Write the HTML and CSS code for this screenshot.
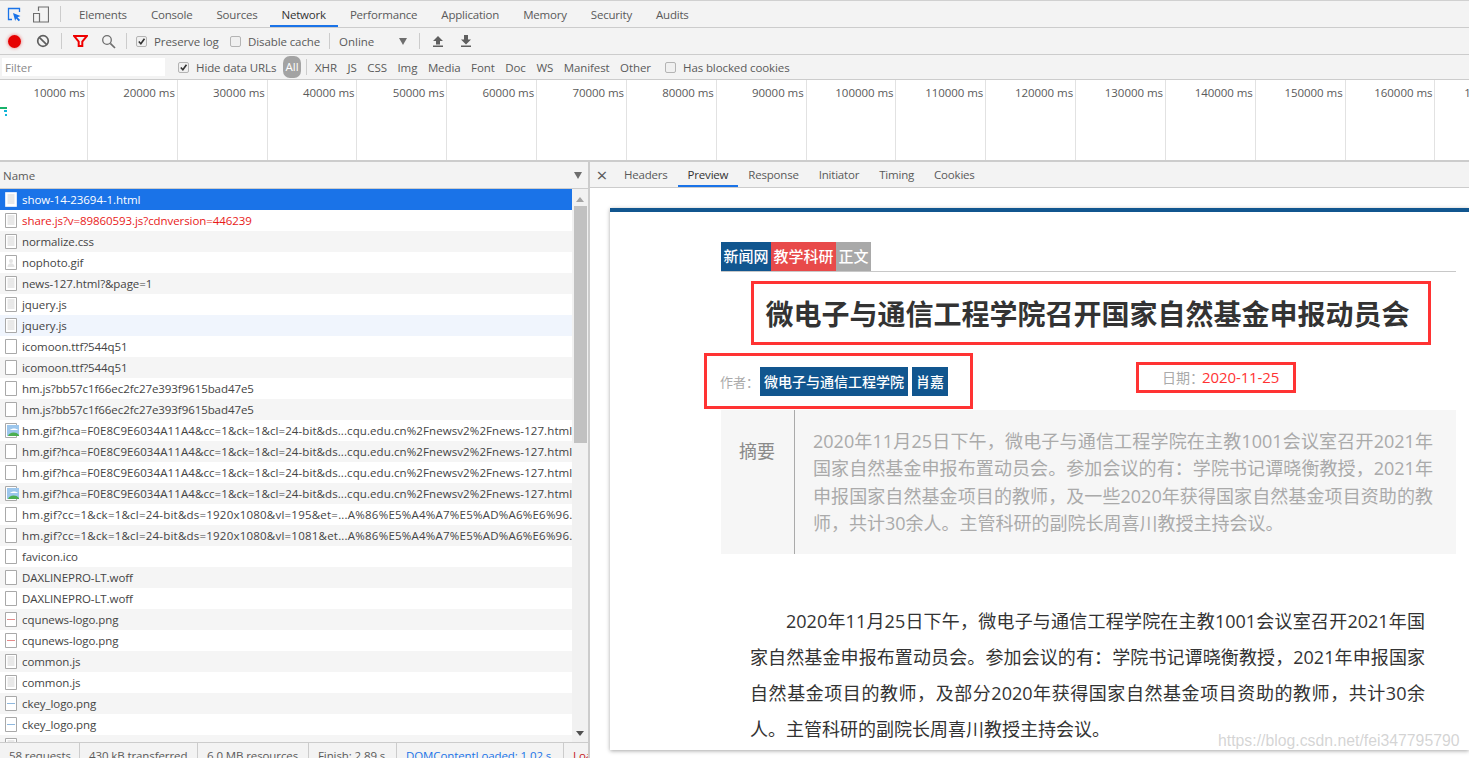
FILE: index.html
```html
<!DOCTYPE html>
<html lang="zh-CN">
<head>
<meta charset="utf-8">
<title>DevTools Network</title>
<link rel="stylesheet" href="styles.css">
</head>
<body>
<svg class="defs" width="0" height="0" aria-hidden="true">
  <symbol id="f-blank" viewBox="0 0 14 15"><path d="M.5.5h11v14H.5z" fill="#fff" stroke="#a9a9a9"/></symbol>
  <symbol id="f-doc" viewBox="0 0 14 15"><path d="M.5.5h11v14H.5z" fill="#fff" stroke="#a9a9a9"/><path d="M2.500 3h7M2.500 5h7M2.500 7h7M2.500 9h7M2.500 11h7" stroke="#d2d2d2"/></symbol>
  <symbol id="f-sel" viewBox="0 0 14 15"><path d="M.5.5h11v14H.5z" fill="#fff" stroke="#d8e6fb"/><path d="M2.500 3h7M2.500 5h7M2.500 7h7M2.500 9h7M2.500 11h7" stroke="#d2d2d2"/></symbol>
  <symbol id="f-img" viewBox="0 0 14 15"><path d="M.5.5h11v14H.5z" fill="#fff" stroke="#a9a9a9"/><path d="M2 2h12v11H2z" fill="#9cc6ec"/><path d="M3 13c1-4 8-5 11-1v1z" fill="#4caf50"/><path d="M5 7c2-2 6-2 8 0z" fill="#fff"/></symbol>
  <symbol id="f-photo" viewBox="0 0 14 15"><path d="M.5.5h11v14H.5z" fill="#fff" stroke="#a9a9a9"/><circle cx="6" cy="6" r="2" fill="#e4e4e4"/><path d="M2.500 12c0-5 7-5 7 0z" fill="#e4e4e4"/></symbol>
  <symbol id="f-red" viewBox="0 0 14 15"><path d="M.5.5h11v14H.5z" fill="#fff" stroke="#a9a9a9"/><path d="M2 7.500h8" stroke="#e58a8a"/></symbol>
  <symbol id="f-blue" viewBox="0 0 14 15"><path d="M.5.5h11v14H.5z" fill="#fff" stroke="#a9a9a9"/><path d="M2 7.500h8" stroke="#8fb8de"/></symbol>
  <symbol id="check" viewBox="0 0 10 10"><path d="M2 5l2.300 2.500L8.300 2" fill="none" stroke="#333" stroke-width="1.800"/></symbol>
</svg>

<div class="devtools">
  <nav class="main-tabs">
    <svg class="ic-inspect" width="15" height="15" viewBox="0 0 15 15"><path d="M5 12.500H1.500v-11h11V5" fill="none" stroke="#1a73e8" stroke-width="1.300"/><path d="M6 6l7.500 3-3 1.200 2.600 2.700-1.400 1.300-2.600-2.700L8.200 14z" fill="#1a73e8"/></svg>
    <svg class="ic-device" width="16" height="17" viewBox="0 0 16 17"><path d="M5.500 5V1h10v15h-10M.5 7.500h6v8.500h-6z" fill="none" stroke="#6e6e6e" stroke-width="1.200"/></svg>
    <span class="vsep vsep-tabs"></span>
    <a class="tab">Elements</a><a class="tab">Console</a><a class="tab">Sources</a><a class="tab active">Network</a><a class="tab">Performance</a><a class="tab">Application</a><a class="tab">Memory</a><a class="tab">Security</a><a class="tab">Audits</a>
  </nav>

  <div class="toolbar">
    <span class="rec"></span>
    <svg class="ic-block" width="14" height="14" viewBox="0 0 14 14"><circle cx="7" cy="7" r="5.300" fill="none" stroke="#5f5f5f" stroke-width="1.700"/><path d="M3.300 3.300l7.400 7.400" stroke="#5f5f5f" stroke-width="1.700"/></svg>
    <span class="vsep vsep-a"></span>
    <svg class="ic-funnel" width="15" height="12" viewBox="0 0 15 12"><path d="M1 1h13L9.300 6.500V11H5.700V6.500z" fill="none" stroke="#e00" stroke-width="2"/></svg>
    <svg class="ic-search" width="15" height="15" viewBox="0 0 15 15"><circle cx="6" cy="6" r="4.300" fill="none" stroke="#6e6e6e" stroke-width="1.300"/><path d="M9.300 9.300l4.700 4.700" stroke="#6e6e6e" stroke-width="1.700"/></svg>
    <span class="vsep vsep-b"></span>
    <label class="opt opt-preserve"><span class="cb"><svg width="10" height="10"><use href="#check"/></svg></span>Preserve log</label>
    <label class="opt opt-disable"><span class="cb"></span>Disable cache</label>
    <span class="vsep vsep-c"></span>
    <span class="online">Online</span>
    <span class="tri"></span>
    <span class="vsep vsep-d"></span>
    <svg class="ic-up" width="12" height="12" viewBox="0 0 12 12"><path d="M6 1l5 5H8v3.500H4V6H1zM1 10.500h10V12H1z" fill="#5f5f5f"/></svg>
    <svg class="ic-down" width="12" height="12" viewBox="0 0 12 12"><path d="M4 0h4v4.500h3l-5 5-5-5h3zM1 10.500h10V12H1z" fill="#5f5f5f"/></svg>
  </div>

  <div class="filterbar">
    <div class="filter-input">Filter</div>
    <label class="opt opt-hide"><span class="cb"><svg width="10" height="10"><use href="#check"/></svg></span>Hide data URLs</label>
    <span class="pill">All</span>
    <span class="vsep vsep-e"></span>
    <div class="types"><span>XHR</span><span>JS</span><span>CSS</span><span>Img</span><span>Media</span><span>Font</span><span>Doc</span><span>WS</span><span>Manifest</span><span>Other</span></div>
    <label class="opt opt-blocked"><span class="cb"></span>Has blocked cookies</label>
  </div>

  <div class="timeline">
    <div class="tick">10000 ms</div><div class="tick">20000 ms</div><div class="tick">30000 ms</div><div class="tick">40000 ms</div><div class="tick">50000 ms</div><div class="tick">60000 ms</div><div class="tick">70000 ms</div><div class="tick">80000 ms</div><div class="tick">90000 ms</div><div class="tick">100000 ms</div><div class="tick">110000 ms</div><div class="tick">120000 ms</div><div class="tick">130000 ms</div><div class="tick">140000 ms</div><div class="tick">150000 ms</div><div class="tick">160000 ms</div><div class="tick">170000 ms</div>
    <span class="mark mark-g"></span><span class="mark mark-c"></span><span class="mark mark-c2"></span>
  </div>

  <div class="split">
    <section class="left">
      <header class="name-head"><span>Name</span><span class="tri tri-name"></span></header>
      <div class="list-wrap">
        <div class="rows">
          <div class="row sel"><svg class="fi"><use href="#f-sel"/></svg><span class="nm">show-14-23694-1.html</span></div>
          <div class="row err"><svg class="fi"><use href="#f-doc"/></svg><span class="nm">share.js?v=89860593.js?cdnversion=446239</span></div>
          <div class="row"><svg class="fi"><use href="#f-doc"/></svg><span class="nm">normalize.css</span></div>
          <div class="row"><svg class="fi"><use href="#f-photo"/></svg><span class="nm">nophoto.gif</span></div>
          <div class="row"><svg class="fi"><use href="#f-doc"/></svg><span class="nm">news-127.html?&amp;page=1</span></div>
          <div class="row"><svg class="fi"><use href="#f-doc"/></svg><span class="nm">jquery.js</span></div>
          <div class="row hov"><svg class="fi"><use href="#f-doc"/></svg><span class="nm">jquery.js</span></div>
          <div class="row"><svg class="fi"><use href="#f-blank"/></svg><span class="nm">icomoon.ttf?544q51</span></div>
          <div class="row"><svg class="fi"><use href="#f-blank"/></svg><span class="nm">icomoon.ttf?544q51</span></div>
          <div class="row"><svg class="fi"><use href="#f-blank"/></svg><span class="nm">hm.js?bb57c1f66ec2fc27e393f9615bad47e5</span></div>
          <div class="row"><svg class="fi"><use href="#f-blank"/></svg><span class="nm">hm.js?bb57c1f66ec2fc27e393f9615bad47e5</span></div>
          <div class="row"><svg class="fi"><use href="#f-img"/></svg><span class="nm wide">hm.gif?hca=F0E8C9E6034A11A4&amp;cc=1&amp;ck=1&amp;cl=24-bit&amp;ds...cqu.edu.cn%2Fnewsv2%2Fnews-127.html</span></div>
          <div class="row"><svg class="fi"><use href="#f-blank"/></svg><span class="nm wide">hm.gif?hca=F0E8C9E6034A11A4&amp;cc=1&amp;ck=1&amp;cl=24-bit&amp;ds...cqu.edu.cn%2Fnewsv2%2Fnews-127.html</span></div>
          <div class="row"><svg class="fi"><use href="#f-blank"/></svg><span class="nm wide">hm.gif?hca=F0E8C9E6034A11A4&amp;cc=1&amp;ck=1&amp;cl=24-bit&amp;ds...cqu.edu.cn%2Fnewsv2%2Fnews-127.html</span></div>
          <div class="row"><svg class="fi"><use href="#f-img"/></svg><span class="nm wide">hm.gif?hca=F0E8C9E6034A11A4&amp;cc=1&amp;ck=1&amp;cl=24-bit&amp;ds...cqu.edu.cn%2Fnewsv2%2Fnews-127.html</span></div>
          <div class="row"><svg class="fi"><use href="#f-blank"/></svg><span class="nm wider">hm.gif?cc=1&amp;ck=1&amp;cl=24-bit&amp;ds=1920x1080&amp;vl=195&amp;et=...A%86%E5%A4%A7%E5%AD%A6%E6%96.</span></div>
          <div class="row"><svg class="fi"><use href="#f-blank"/></svg><span class="nm wider">hm.gif?cc=1&amp;ck=1&amp;cl=24-bit&amp;ds=1920x1080&amp;vl=1081&amp;et...A%86%E5%A4%A7%E5%AD%A6%E6%96.</span></div>
          <div class="row"><svg class="fi"><use href="#f-blank"/></svg><span class="nm">favicon.ico</span></div>
          <div class="row"><svg class="fi"><use href="#f-blank"/></svg><span class="nm">DAXLINEPRO-LT.woff</span></div>
          <div class="row"><svg class="fi"><use href="#f-blank"/></svg><span class="nm">DAXLINEPRO-LT.woff</span></div>
          <div class="row"><svg class="fi"><use href="#f-red"/></svg><span class="nm">cqunews-logo.png</span></div>
          <div class="row"><svg class="fi"><use href="#f-red"/></svg><span class="nm">cqunews-logo.png</span></div>
          <div class="row"><svg class="fi"><use href="#f-doc"/></svg><span class="nm">common.js</span></div>
          <div class="row"><svg class="fi"><use href="#f-doc"/></svg><span class="nm">common.js</span></div>
          <div class="row"><svg class="fi"><use href="#f-blue"/></svg><span class="nm">ckey_logo.png</span></div>
          <div class="row"><svg class="fi"><use href="#f-blue"/></svg><span class="nm">ckey_logo.png</span></div>
          <div class="row"><svg class="fi"><use href="#f-doc"/></svg><span class="nm">base.js</span></div>
        </div>
        <div class="scrollbar">
          <span class="sb-up"></span>
          <span class="sb-thumb"></span>
          <span class="sb-down"></span>
        </div>
      </div>
      <footer class="status">
        <span class="st st1">58 requests</span><span class="st st2">430 kB transferred</span><span class="st st3">6.0 MB resources</span><span class="st st4">Finish: 2.89 s</span><span class="st st5 dcl">DOMContentLoaded: 1.02 s</span><span class="st st6 load">Load: 1.95 s</span>
      </footer>
    </section>

    <section class="right">
      <nav class="detail-tabs">
        <span class="close">×</span>
        <a class="dtab">Headers</a><a class="dtab active">Preview</a><a class="dtab">Response</a><a class="dtab">Initiator</a><a class="dtab">Timing</a><a class="dtab">Cookies</a>
      </nav>
      <div class="preview">
        <article class="card">
          <div class="crumbs">
            <a class="crumb c-blue">新闻网</a><a class="crumb c-red">教学科研</a><a class="crumb c-gray">正文</a>
          </div>
          <h1 class="title">微电子与通信工程学院召开国家自然基金申报动员会</h1>
          <div class="meta">
            <div class="authors"><span class="lbl">作者：</span><a class="tag">微电子与通信工程学院</a><a class="tag">肖嘉</a></div>
            <div class="date"><span class="lbl-date">日期：</span><span class="date-val">2020-11-25</span></div>
          </div>
          <div class="summary">
            <div class="sum-label">摘要</div>
            <p class="sum-text">2020年11月25日下午，微电子与通信工程学院在主教1001会议室召开2021年国家自然基金申报布置动员会。参加会议的有：学院书记谭晓衡教授，2021年申报国家自然基金项目的教师，及一些2020年获得国家自然基金项目资助的教师，共计30余人。主管科研的副院长周喜川教授主持会议。</p>
          </div>
          <p class="body-text">2020年11月25日下午，微电子与通信工程学院在主教1001会议室召开2021年国家自然基金申报布置动员会。参加会议的有：学院书记谭晓衡教授，2021年申报国家自然基金项目的教师，及部分2020年获得国家自然基金项目资助的教师，共计30余人。主管科研的副院长周喜川教授主持会议。</p>
        </article>
      </div>
    </section>
  </div>
</div>
<div class="watermark">https://blog.csdn.net/fei347795790</div>
</body>
</html>
```
FILE: styles.css
```css
* { box-sizing: border-box; }
html, body { margin: 0; height: 100%; overflow: hidden; }
body { background: #fff; font-family: "Open Sans", "Noto Sans CJK SC", sans-serif; font-size: 11.5px; color: #5a5a5a; }
.defs { position: absolute; }
.devtools { width: 1469px; height: 758px; display: flex; flex-direction: column; overflow: hidden; }

/* shared */
.vsep { width: 1px; height: 16px; background: #ccc; flex: none; }
.opt { display: flex; align-items: center; flex: none; letter-spacing: -.1px; }
.cb { width: 11px; height: 11px; margin-right: 7px; border: 1px solid #b4b4b4; border-radius: 2px; background: #f0f0f0; display: flex; flex: none; }
.cb svg { display: block; margin: 0; width: 9px; height: 9px; }
.tri { width: 0; height: 0; border-left: 4px solid transparent; border-right: 4px solid transparent; border-top: 7px solid #6e6e6e; flex: none; }

/* main tabs */
.main-tabs { height: 28px; flex: none; display: flex; align-items: center; background: #f3f3f3; border-top: 1px solid #d0d0d0; border-bottom: 1px solid #ccc; }
.ic-inspect { margin-left: 7px; flex: none; }
.ic-device { margin-left: 11px; flex: none; }
.vsep-tabs { margin: 0 6px 0 11px; }
.tab { height: 26px; line-height: 28px; padding: 0 12px; border-bottom: 2px solid transparent; flex: none; letter-spacing: -.2px; }
.tab.active { color: #333; border-bottom-color: #1a73e8; }

/* toolbar */
.toolbar { height: 27px; flex: none; display: flex; align-items: center; background: #f3f3f3; border-bottom: 1px solid #ccc; }
.rec { width: 13px; height: 13px; margin-left: 8px; border-radius: 50%; background: #e60000; box-shadow: 0 0 3px 1px rgba(230,0,0,.3); flex: none; }
.ic-block { margin-left: 15px; flex: none; }
.vsep-a { margin-left: 11px; }
.ic-funnel { margin-left: 11px; flex: none; }
.ic-search { margin-left: 13px; flex: none; }
.vsep-b { margin-left: 10px; }
.opt-preserve { margin-left: 9px; width: 94px; }
.opt-disable { width: 99px; }
.vsep-c { margin-left: 0; }
.online { margin-left: 9px; width: 60px; }
.vsep-d { margin-left: 12px; }
.ic-up { margin-left: 12px; flex: none; }
.ic-down { margin-left: 16px; flex: none; }

/* filter bar */
.filterbar { height: 25px; flex: none; display: flex; align-items: center; background: #f3f3f3; border-bottom: 1px solid #ccc; }
.filter-input { width: 163px; height: 18px; line-height: 19px; margin-left: 2px; padding-left: 3px; background: #fff; color: #8a8a8a; flex: none; }
.opt-hide { margin-left: 13px; width: 105px; }
.pill { width: 18px; height: 22px; line-height: 22px; text-align: center; border-radius: 7px; background: #a3a3a3; color: #fff; flex: none; }
.vsep-e { margin-left: 5px; }
.types { display: flex; margin-left: 8px; width: 336px; justify-content: space-between; flex: none; letter-spacing: -.1px; }
.opt-blocked { margin-left: 14px; }

/* timeline */
.timeline { position: relative; height: 82px; flex: none; display: flex; background: #fff; border-bottom: 2px solid #ccc; }
.tick { flex: 0 0 89.840px; border-right: 1px solid #e2e2e2; text-align: right; padding: 4px 2px 0 0; white-space: nowrap; line-height: 18px; letter-spacing: -.05px; }
.tick:first-child { flex-basis: 88px; }
.mark { position: absolute; display: block; }
.mark-g { left: 0; top: 27px; width: 7px; height: 2px; background: #17b26a; }
.mark-c { left: 4px; top: 30px; width: 3px; height: 2px; background: #12b5d8; }
.mark-c2 { left: 5px; top: 34px; width: 2px; height: 2px; background: #12b5d8; }

/* split */
.split { flex: 1; min-height: 0; display: flex; }
.left { width: 590px; flex: none; display: flex; flex-direction: column; border-right: 2px solid #ccc; background: #fff; }
.name-head { height: 27px; flex: none; display: flex; align-items: center; justify-content: space-between; padding: 0 6px 0 3px; background: #f3f3f3; border-bottom: 1px solid #ccc; }
.tri-name { border-left-width: 4px; border-right-width: 4px; }
.list-wrap { flex: 1; min-height: 0; display: flex; overflow: hidden; }
.rows { width: 572px; flex: none; overflow: hidden; }
.row { height: 21px; display: flex; align-items: center; padding-left: 5px; white-space: nowrap; overflow: hidden; color: #444; letter-spacing: -.07px; }
.row:nth-child(even) { background: #fff; }
.row:nth-child(odd) { background: #f5f5f5; }
.row.sel { background: #1a73e8; color: #fff; }
.row.err { color: #e81a1a; }
.row.hov { background: #f0f5fd; }
.fi { width: 14px; height: 15px; flex: none; margin-right: 3px; }
.nm { display: block; }
.wide { letter-spacing: .09px; }
.wider { letter-spacing: .22px; }
.scrollbar { width: 16px; flex: none; background: #f1f1f1; display: flex; flex-direction: column; align-items: center; padding-top: 8px; }
.sb-up { width: 0; height: 0; border-left: 4px solid transparent; border-right: 4px solid transparent; border-bottom: 5px solid #a3a3a3; flex: none; }
.sb-thumb { width: 13px; height: 237px; margin-top: 4px; background: #c1c1c1; flex: none; }
.sb-down { width: 0; height: 0; margin-top: auto; margin-bottom: 6px; border-left: 4px solid transparent; border-right: 4px solid transparent; border-top: 5px solid #505050; flex: none; }
.status { height: 16px; flex: none; display: flex; background: #f3f3f3; border-top: 1px solid #ccc; overflow: hidden; }
.st { height: 20px; padding-top: 5px; flex: none; white-space: nowrap; border-right: 1px solid #ccc; padding-left: 9px; letter-spacing: -.1px; }
.st1 { width: 80px; }
.st2 { width: 118px; }
.st3 { width: 111px; }
.st4 { width: 88px; }
.st5 { width: 167px; }
.st6 { border-right: 0; }
.dcl { color: #1a73e8; }
.load { color: #c5221f; }

/* detail */
.right { flex: 1; min-width: 0; display: flex; flex-direction: column; background: #fff; }
.detail-tabs { height: 26px; flex: none; display: flex; align-items: center; background: #f3f3f3; border-bottom: 1px solid #ccc; }
.close { width: 24px; text-align: center; font-size: 19px; line-height: 20px; color: #5a5a5a; flex: none; }
.dtab { height: 25px; line-height: 25px; padding: 0 10px; border-bottom: 2px solid transparent; flex: none; letter-spacing: -.2px; }
.dtab.active { color: #333; border-bottom-color: #1a73e8; }
.preview { flex: 1; min-height: 0; padding: 20px 0 0 20px; overflow: hidden; }

/* article */
.card { height: 542px; border-top: 4px solid #11568f; box-shadow: 0 1px 4px rgba(0,0,0,.35); background: #fff; padding: 30px 13px 0 111px; overflow: hidden; font-family: "Noto Sans CJK SC", sans-serif; }
.crumbs { display: flex; height: 30px; border-bottom: 1px solid #c8c8c8; }
.crumb { height: 29px; padding: 0 2.500px; font-size: 15px; font-weight: 500; line-height: 28px; color: #fff; flex: none; }
.c-blue { background: #11568f; }
.c-red { background: #e84a4a; }
.c-gray { background: #a9a9a9; }
.title { width: 680px; height: 64px; margin: 9px 0 0 30px; padding-right: 7px; border: 3px solid #f33; font-size: 28px; font-weight: 700; line-height: 58px; text-align: center; color: #333; white-space: nowrap; }
.meta { display: flex; align-items: flex-start; height: 56px; margin: 8px 0 0 -17px; }
.authors { width: 269px; height: 56px; display: flex; align-items: center; padding-left: 13px; border: 3px solid #f33; flex: none; }
.lbl { width: 40px; font-size: 13px; color: #aaa; flex: none; }
.tag { height: 29px; line-height: 29px; padding: 0 4px; margin-right: 4px; font-size: 14px; font-weight: 500; color: #fff; background: #11568f; flex: none; white-space: nowrap; }
.date { width: 160px; height: 31px; margin: 9px 0 0 163px; padding-left: 23px; line-height: 25px; font-size: 14px; border: 3px solid #f33; flex: none; white-space: nowrap; }
.lbl-date { display: inline-block; width: 40px; color: #aaa; }
.date-val { font-family: "Open Sans", sans-serif; font-size: 15px; letter-spacing: -.1px; color: #f33; }
.summary { display: flex; height: 144px; margin-top: 1px; background: #f6f6f6; }
.sum-label { width: 74px; padding: 25px 0 0 18px; font-size: 18px; line-height: 30px; color: #8a8a8a; border-right: 1px solid #aaa; flex: none; }
.sum-text { width: 620px; margin: 18px 0 0 18px; font-family: "Open Sans", "Noto Sans CJK SC", sans-serif; font-size: 18px; line-height: 27.33px; text-align: justify; color: #aaa; }
.body-text { width: 675px; margin: 49px 0 0 29px; font-family: "Open Sans", "Noto Sans CJK SC", sans-serif; font-size: 18px; line-height: 36px; text-align: justify; text-indent: 36px; color: #333; }
.watermark { position: absolute; left: 1218px; top: 732px; font-family: "Liberation Sans", sans-serif; font-size: 15.800px; color: rgba(170,170,170,.5); white-space: nowrap; }
```
